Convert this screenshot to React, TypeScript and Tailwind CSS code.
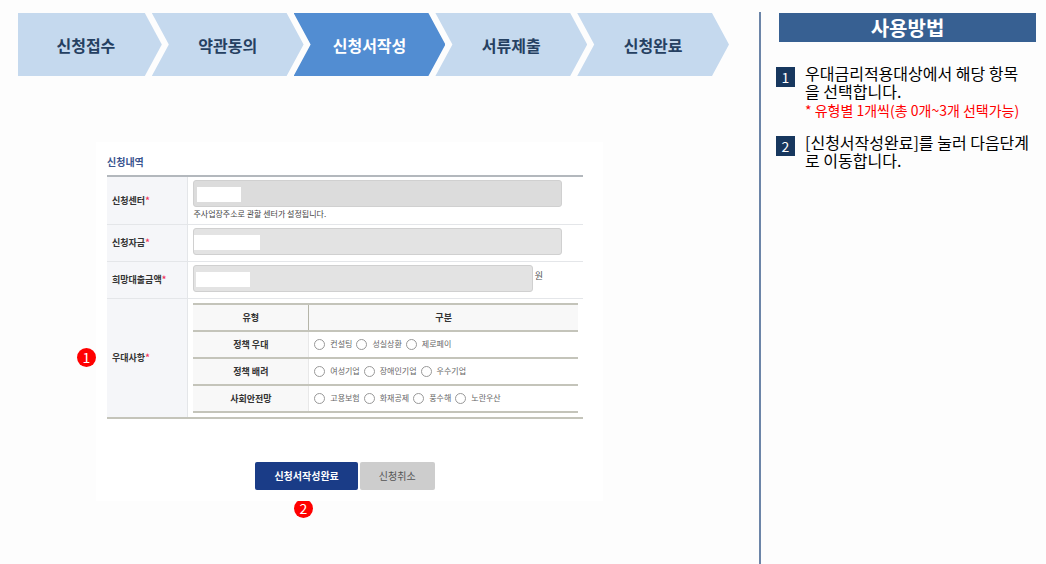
import React, { useState } from "react";
import clsx from "clsx";

interface RadioRow {
  id: string;
  title: string;
  options: string[];
}

const steps = ["신청접수", "약관동의", "신청서작성", "서류제출", "신청완료"];

const radioRows: RadioRow[] = [
  { id: "policy", title: "정책 우대", options: ["컨설팅", "성실상환", "제로페이"] },
  { id: "care", title: "정책 배려", options: ["여성기업", "장애인기업", "우수기업"] },
  { id: "safety", title: "사회안전망", options: ["고용보험", "화재공제", "풍수해", "노란우산"] },
];

function StepBar({ current }: { current: number }) {
  return (
    <nav>
      <ol className="flex h-16 pt-px">
        {steps.map((step, i) => (
          <li
            key={step}
            aria-current={i === current ? "step" : undefined}
            className={clsx(
              "flex items-center justify-center text-base font-bold",
              i === 0
                ? "flex-[144] [clip-path:polygon(0_0,calc(100%-17px)_0,100%_50%,calc(100%-17px)_100%,0_100%)]"
                : "-ml-[10px] flex-[152] [clip-path:polygon(0_0,calc(100%-17px)_0,100%_50%,calc(100%-17px)_100%,0_100%,17px_50%)]",
              i === current ? "bg-[#528dd2] text-white" : "bg-[#c5d9ee] text-[#254061]"
            )}
          >
            <span className={i === 0 ? "pr-2" : undefined}>{step}</span>
          </li>
        ))}
      </ol>
    </nav>
  );
}

function RowHead({ children, htmlFor }: { children: React.ReactNode; htmlFor?: string }) {
  return (
    <th scope="row" className="w-[17%] border-r border-[#e4e6e9] bg-[#f5f6f9] pl-[5px] text-left align-middle font-bold">
      {htmlFor ? <label htmlFor={htmlFor}>{children}</label> : children}
      <span className="text-[#f0355b]">*</span>
    </th>
  );
}

function LockedInput({ id, mask, dark }: { id: string; mask: string; dark?: boolean }) {
  return (
    <div className="relative flex-1">
      <input
        id={id}
        readOnly
        className={clsx(
          "block h-[27px] w-full rounded-[3px] border border-[#d0d0d0] px-2 outline-none",
          dark ? "bg-[#dcdcdc]" : "bg-[#e3e3e3]"
        )}
      />
      <span className={clsx("absolute top-[7px] h-[15px] bg-white", mask)} />
    </div>
  );
}

function Marker({ n, className }: { n: number; className?: string }) {
  return (
    <span className={clsx("flex size-[19px] items-center justify-center rounded-full bg-[#ff0000] text-sm leading-none text-white", className)}>
      {n}
    </span>
  );
}

export default function App() {
  const [picked, setPicked] = useState<Record<string, string>>({});

  return (
    <div className="flex min-h-screen bg-[#fdfdfd] pt-3 font-['Noto_Sans_CJK_KR',sans-serif]">
      <main className="min-w-0 flex-1 pr-[30px] pl-[18px]">
        <StepBar current={2} />

        <form className="mt-[66px] mr-[126px] ml-[78px]" onSubmit={(e) => e.preventDefault()}>
          <div className="relative z-10 bg-white pt-3 pr-[20px] pb-[11px] pl-[11px]">
            <h2 className="mb-[5px] text-[10px] leading-4 font-bold text-[#3a5590]">신청내역</h2>

            <table className="w-full border-collapse border-t-2 border-b-2 border-t-[#b3b8bd] border-b-[#c4c4ba] text-[9px] leading-[13px] text-[#333]">
              <tbody>
                <tr className="h-12 border-b border-[#e4e6e9]">
                  <RowHead htmlFor="center">신청센터</RowHead>
                  <td className="py-[3px] pr-[21px] pl-[5px]">
                    <LockedInput id="center" mask="left-1 w-11" dark />
                    <p className="text-[8px] text-[#444]">주사업장주소로 관할 센터가 설정됩니다.</p>
                  </td>
                </tr>
                <tr className="h-[37px] border-b border-[#e4e6e9]">
                  <RowHead htmlFor="fund">신청자금</RowHead>
                  <td className="pt-[3px] pr-[21px] pb-[6px] pl-[5px]">
                    <LockedInput id="fund" mask="left-px w-[66px]" />
                  </td>
                </tr>
                <tr className="h-[37px] border-b border-[#e4e6e9]">
                  <RowHead htmlFor="amount">희망대출금액</RowHead>
                  <td className="pt-[3px] pr-10 pb-[6px] pl-[5px]">
                    <div className="flex gap-[2px]">
                      <LockedInput id="amount" mask="left-[3px] w-[54px]" />
                      <span className="mt-1 text-[#555]">원</span>
                    </div>
                  </td>
                </tr>
                <tr>
                  <RowHead>우대사항</RowHead>
                  <td className="py-1 pr-[5px] pl-[5px]">
                    <table className="w-full border-collapse">
                      <thead>
                        <tr className="h-[27px] border-y-2 border-[#c4c4ba] bg-[#f8f8f8]">
                          <th scope="col" className="w-[30%] border-r border-[#b5b5a8]">유형</th>
                          <th scope="col">구분</th>
                        </tr>
                      </thead>
                      <tbody>
                        {radioRows.map((row) => (
                          <tr key={row.id} className="h-[27px] border-b-2 border-[#c4c4ba]">
                            <th scope="row" className="border-r border-r-[#e8e8e8] bg-[#f8f8f8]">{row.title}</th>
                            <td className="pl-[5px]">
                              <div className="flex gap-1">
                                {row.options.map((option) => (
                                  <label key={option} className="flex items-center gap-[5px] text-[8px] leading-3 text-[#666]">
                                    <input
                                      type="radio"
                                      name={row.id}
                                      value={option}
                                      checked={picked[row.id] === option}
                                      onChange={() => setPicked({ ...picked, [row.id]: option })}
                                      className="size-[11px] appearance-none rounded-full border border-[#999] bg-white checked:border-[3px] checked:border-[#1a3c87]"
                                    />
                                    {option}
                                  </label>
                                ))}
                              </div>
                            </td>
                          </tr>
                        ))}
                      </tbody>
                    </table>
                  </td>
                </tr>
              </tbody>
            </table>
            <Marker n={1} className="absolute bottom-[134px] -left-[19px]" />

            <div className="mt-[43px] flex justify-center gap-[2px] text-[10px]">
              <button type="submit" className="h-7 rounded-[2px] bg-[#1a3c87] px-[19px] font-bold text-white">
                신청서작성완료
              </button>
              <button type="button" className="h-7 rounded-[2px] bg-[#cdcdcd] px-[19px] text-[#555]">
                신청취소
              </button>
            </div>
          </div>
          <div className="-mt-[2px] flex justify-center pr-[92px]">
            <Marker n={2} />
          </div>
        </form>
      </main>

      <aside className="w-[287px] shrink-0 border-l-2 border-[#6c85a8] pt-px pr-[10px] pl-[15px]">
        <h1 className="ml-[3px] bg-[#376092] text-center text-xl leading-[29px] font-bold text-white">사용방법</h1>
        <ol className="mt-[22px] flex flex-col gap-[14px] pr-1 text-base leading-[18px] text-black">
          <li className="flex items-start gap-[10px]">
            <span className="mt-[3px] flex h-5 w-[19px] shrink-0 items-center justify-center bg-[#17375e] text-sm text-white">1</span>
            <div>
              <p>우대금리적용대상에서 해당 항목을 선택합니다.</p>
              <p className="mt-px text-sm leading-[18px] whitespace-nowrap text-[#ff0000]">* 유형별 1개씩(총 0개~3개 선택가능)</p>
            </div>
          </li>
          <li className="flex items-start gap-[10px]">
            <span className="mt-[3px] flex h-5 w-[19px] shrink-0 items-center justify-center bg-[#17375e] text-sm text-white">2</span>
            <p>[신청서작성완료]를 눌러 다음단계로 이동합니다.</p>
          </li>
        </ol>
      </aside>
    </div>
  );
}
